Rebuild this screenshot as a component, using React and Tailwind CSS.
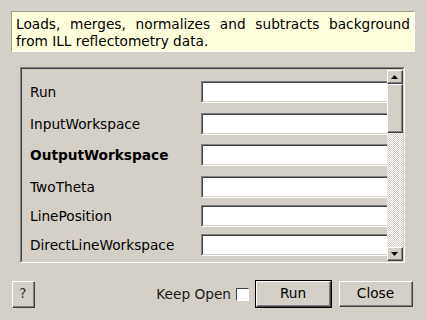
const rows = [
  { label: "Run", mt: "mt-0" },
  { label: "InputWorkspace", mt: "mt-[10px]" },
  { label: "OutputWorkspace", mt: "mt-[9px]", bold: true },
  { label: "TwoTheta", mt: "mt-[10px]" },
  { label: "LinePosition", mt: "mt-[7px]" },
  { label: "DirectLineWorkspace", mt: "mt-[7px]" },
];

function Raised({ className = "", children }) {
  return (
    <div className={`border-t border-l border-b border-r border-t-white border-l-white border-b-[#404040] border-r-[#404040] ${className}`}>
      <div className="w-full h-full border-b border-r border-[#808080] flex items-center justify-center">
        {children}
      </div>
    </div>
  );
}

export default function App() {
  return (
    <div
      className="w-[426px] h-[320px] bg-[#d4d0c8] text-[13.7px] text-black overflow-hidden flex flex-col"
      style={{ fontFamily: '"DejaVu Sans", sans-serif' }}
    >
      {/* Description */}
      <div className="mt-[11px] ml-[11px] w-[404px] h-[41px] border border-t-[#a09d97] border-l-[#a09d97] border-b-white border-r-white bg-[#ffffdc] px-[4px] pt-[4px] leading-[17px] text-justify">
        Loads, merges, normalizes and subtracts background from ILL reflectometry data.
      </div>

      {/* Properties frame */}
      <div className="mt-[15px] ml-[20px] w-[385px] h-[196px] border border-t-[#808080] border-l-[#808080] border-b-white border-r-white">
        <div className="w-full h-full border border-t-[#404040] border-l-[#404040] border-b-[#d4d0c8] border-r-[#d4d0c8] flex">
          <div className="flex-1 overflow-hidden pt-[12px] pl-[8px]">
            {rows.map((r) => (
              <div key={r.label} className={`flex items-center h-[22px] ${r.mt}`}>
                <span className={`w-[171px] shrink-0 pt-[1px] ${r.bold ? "font-bold" : ""}`}>{r.label}</span>
                <div className="w-[220px] shrink-0 h-[22px] border border-t-[#808080] border-l-[#808080] border-b-white border-r-white">
                  <div className="w-full h-full bg-white border border-t-[#404040] border-l-[#404040] border-b-[#d4d0c8] border-r-[#d4d0c8]" />
                </div>
              </div>
            ))}
          </div>
          {/* Scrollbar */}
          <div className="w-[16px] flex flex-col pt-[1px]">
            <Raised className="h-[14px] bg-[#d4d0c8]">
              <svg width="7" height="4" viewBox="0 0 7 4">
                <path d="M3.5 0 L7 4 L0 4 Z" fill="#000" />
              </svg>
            </Raised>
            <Raised className="h-[49px] bg-[#d4d0c8]" />
            <div className="flex-1 bg-[image:repeating-conic-gradient(#d4d0c8_0%_25%,#ffffff_0%_50%)] bg-[length:2px_2px]" />
            <Raised className="h-[14px] bg-[#d4d0c8]">
              <svg width="7" height="4" viewBox="0 0 7 4">
                <path d="M0 0 L7 0 L3.5 4 Z" fill="#000" />
              </svg>
            </Raised>
          </div>
        </div>
      </div>

      {/* Buttons */}
      <div className="mt-[17px] flex items-center pl-[12px] pr-[13px]">
        <Raised className="w-[23px] h-[27px] text-[#333]">?</Raised>
        <div className="flex-1" />
        <span className="text-[#1a1a1a]">Keep Open</span>
        <div className="ml-[5px] w-[13px] h-[13px] bg-white border border-t-[#404040] border-l-[#404040] border-b-white border-r-white" />
        <div className="ml-[6px] w-[77px] h-[28px] border border-black">
          <Raised className="w-full h-full">Run</Raised>
        </div>
        <Raised className="ml-[7px] w-[74px] h-[26px]">Close</Raised>
      </div>
    </div>
  );
}
